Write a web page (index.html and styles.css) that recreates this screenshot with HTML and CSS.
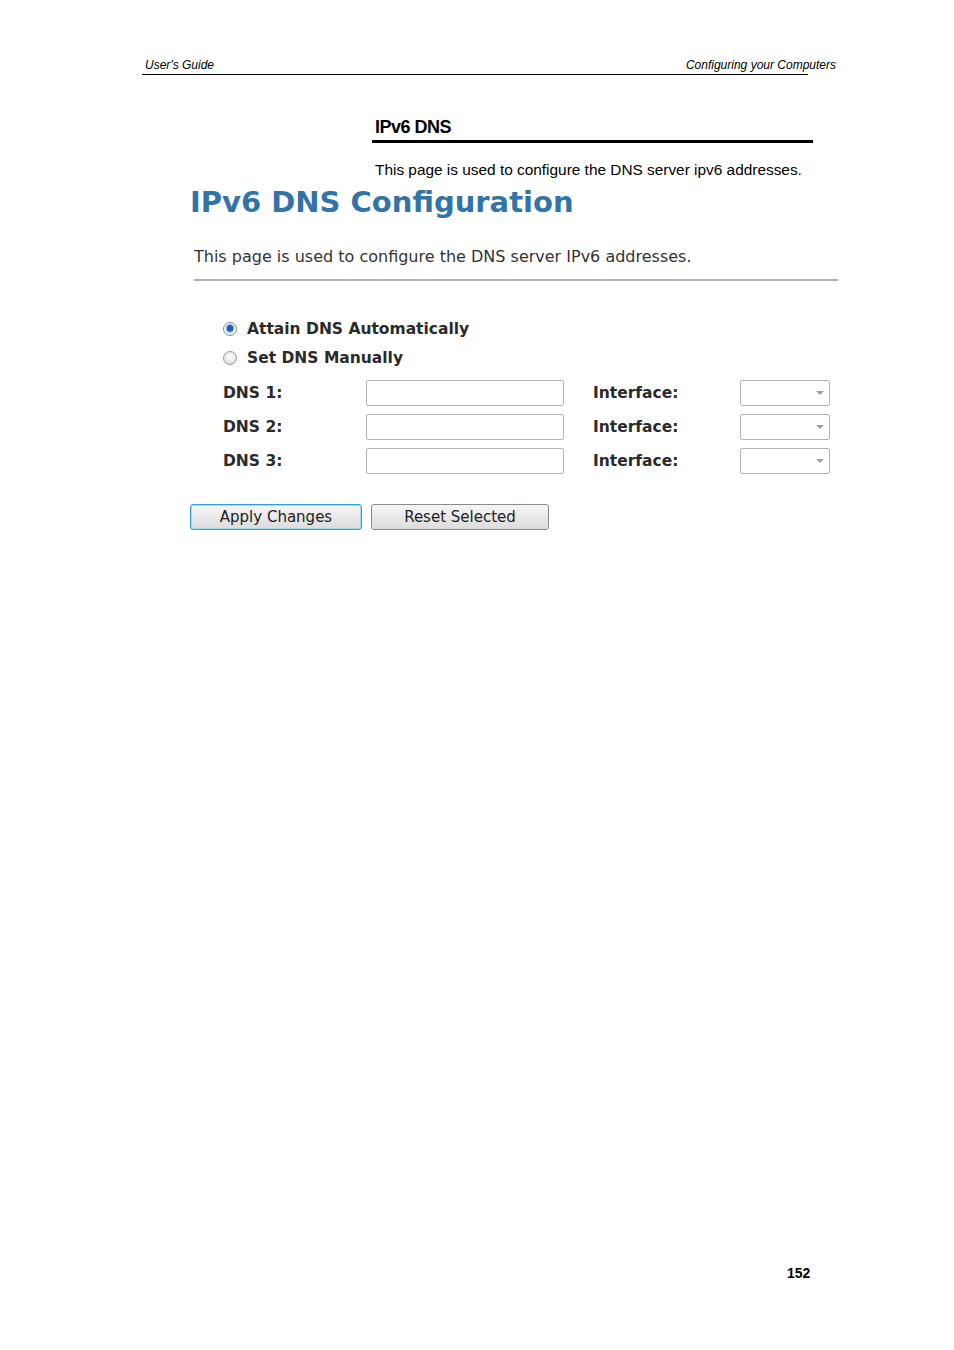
FILE: index.html
```html
<!DOCTYPE html>
<html>
<head>
<meta charset="utf-8">
<link rel="stylesheet" href="styles.css">
</head>
<body>
<div class="page">
  <header class="running">
    <span class="left">User's Guide</span>
    <span class="right">Configuring your Computers</span>
  </header>
  <section class="doc">
    <h2 class="sec-title">IPv6 DNS</h2>
    <p class="sec-text">This page is used to configure the DNS server ipv6 addresses.</p>
  </section>
  <section class="shot">
    <h1 class="cfg-title">IPv6 DNS Configuration</h1>
    <p class="cfg-desc">This page is used to configure the DNS server IPv6 addresses.</p>
    <div class="rule"></div>
    <div class="radios">
      <label class="radio-row"><span class="radio checked"></span>Attain DNS Automatically</label>
      <label class="radio-row"><span class="radio"></span>Set DNS Manually</label>
    </div>
    <div class="grid">
      <span class="lbl">DNS 1:</span><span class="txt"></span><span class="lbl">Interface:</span><span class="sel"><span class="arrow"></span></span>
      <span class="lbl">DNS 2:</span><span class="txt"></span><span class="lbl">Interface:</span><span class="sel"><span class="arrow"></span></span>
      <span class="lbl">DNS 3:</span><span class="txt"></span><span class="lbl">Interface:</span><span class="sel"><span class="arrow"></span></span>
    </div>
    <div class="buttons">
      <button class="btn apply">Apply Changes</button>
      <button class="btn reset">Reset Selected</button>
    </div>
  </section>
  <footer class="pageno">152</footer>
</div>
</body>
</html>
```
FILE: styles.css
```css
* { box-sizing: border-box; }
html, body { margin: 0; padding: 0; background: #fff; }
.page {
  width: 954px;
  height: 1350px;
  position: relative;
  font-family: "Liberation Sans", Arial, sans-serif;
  color: #000;
}
.running {
  margin: 0 0 0 142px;
  padding-top: 57px;
  width: 666px;
  height: 75px;
  border-bottom: 1px solid #000;
  display: flex;
  justify-content: space-between;
  font-style: italic;
  font-size: 12px;
  line-height: 16px;
  white-space: nowrap;
}
.running .left { padding-left: 3px; }
.running .right { margin-right: -28px; }
.doc { margin-left: 372px; width: 441px; }
.sec-title {
  margin: 41px 0 0 0;
  padding: 0 0 2px 3px;
  font-size: 18px;
  line-height: 22px;
  font-weight: bold;
  letter-spacing: -0.5px;
  border-bottom: 3px solid #000;
}
.sec-text {
  margin: 17px 0 0 3px;
  font-size: 15.4px;
  line-height: 20px;
  white-space: nowrap;
}
.shot {
  margin-left: 190px;
  width: 648px;
  font-family: "DejaVu Sans", Verdana, sans-serif;
}
.cfg-title {
  margin: 4px 0 0 0;
  font-size: 29px;
  line-height: 36px;
  color: #3374a6;
  font-weight: bold;
  letter-spacing: 0;
  white-space: nowrap;
}
.cfg-desc {
  margin: 27px 0 0 4px;
  font-size: 16px;
  line-height: 20px;
  color: #333;
  white-space: nowrap;
}
.rule {
  margin: 12px 0 0 4px;
  height: 2px;
  background: #b0b0b0;
}
.radios { margin: 33px 0 0 33px; }
.radio-row {
  display: flex;
  align-items: center;
  height: 29px;
  font-weight: bold;
  font-size: 15.5px;
  color: #2a2a2a;
}
.radio {
  width: 14px;
  height: 14px;
  border-radius: 50%;
  border: 1px solid #9a9a9a;
  background: radial-gradient(circle at 50% 40%, #ffffff, #d4d4d4);
  margin-right: 10px;
  position: relative;
}
.radio.checked {
  background: radial-gradient(circle at 50% 45%, #1f5fa8 0 3px, #8bb5e0 3.5px 4px, #f2f2f2 4.5px);
  border-color: #7a8fa5;
}
.grid {
  margin: 8px 0 0 33px;
  display: grid;
  grid-template-columns: 143px 198px 176px 90px;
  column-gap: 0;
  row-gap: 8px;
  align-items: center;
}
.grid .lbl {
  font-weight: bold;
  font-size: 15.5px;
  color: #2a2a2a;
  line-height: 26px;
}
.grid .lbl:nth-child(4n+3) { padding-left: 29px; }
.txt {
  height: 26px;
  width: 198px;
  border: 1px solid #b5b5b5;
  border-radius: 2px;
  background: #fff;
}
.sel {
  height: 26px;
  width: 90px;
  border: 1px solid #b5b5b5;
  border-radius: 2px;
  background: #fff;
  display: flex;
  justify-content: flex-end;
  align-items: center;
  padding-right: 5px;
}
.arrow {
  width: 0; height: 0;
  border-left: 4px solid transparent;
  border-right: 4px solid transparent;
  border-top: 4px solid #a0a0a0;
}
.buttons {
  margin-top: 30px;
  display: flex;
  gap: 9px;
}
.btn {
  height: 26px;
  font-family: "DejaVu Sans", Verdana, sans-serif;
  font-size: 15px;
  color: #222;
  border-radius: 3px;
  background: linear-gradient(#f6f6f6, #dcdcdc);
  padding: 0;
}
.btn.apply { width: 172px; border: 1px solid #3c9ad6; box-shadow: inset 0 0 0 1px #a9d6f3; }
.btn.reset { width: 178px; border: 1px solid #8a8a8a; }
.pageno {
  position: absolute;
  left: 787px;
  top: 1264px;
  font-weight: bold;
  font-size: 14px;
  line-height: 18px;
}
```
